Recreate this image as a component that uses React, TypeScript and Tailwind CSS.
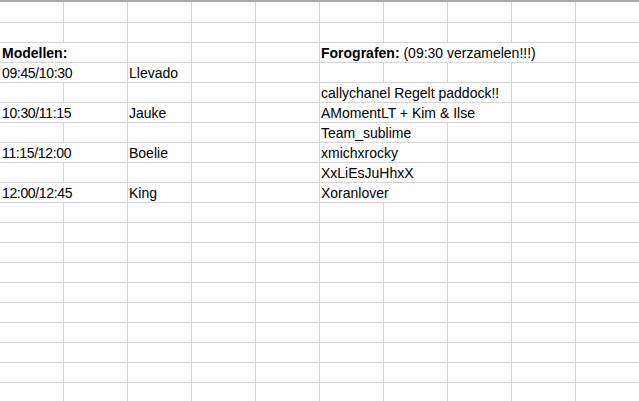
type Cell = { span?: number; text?: React.ReactNode; pad?: string };

const e = (n: number): Cell[] => Array.from({ length: n }, () => ({}));

const rows: Cell[][] = [
  e(10),
  e(10),
  [
    { span: 2, text: <b>Modellen:</b>, pad: "pl-[2px]" },
    ...e(3),
    {
      span: 4,
      text: (
        <>
          <b>Forografen:</b> (09:30 verzamelen!!!)
        </>
      ),
    },
    ...e(1),
  ],
  [{ span: 2, text: "09:45/10:30", pad: "pl-[2px] tracking-[-0.35px]" }, { text: "Llevado" }, ...e(7)],
  [...e(5), { span: 3, text: "callychanel Regelt paddock!!" }, ...e(2)],
  [
    { span: 2, text: "10:30/11:15", pad: "pl-[2px] tracking-[-0.35px]" },
    { text: "Jauke" },
    ...e(2),
    { span: 3, text: "AMomentLT + Kim & Ilse" },
    ...e(2),
  ],
  [...e(5), { span: 2, text: "Team_sublime" }, ...e(3)],
  [
    { span: 2, text: "11:15/12:00", pad: "pl-[2px] tracking-[-0.35px]" },
    { text: "Boelie" },
    ...e(2),
    { span: 2, text: "xmichxrocky" },
    ...e(3),
  ],
  [...e(5), { span: 2, text: "XxLiEsJuHhxX" }, ...e(3)],
  [
    { span: 2, text: "12:00/12:45", pad: "pl-[2px] tracking-[-0.35px]" },
    { text: "King" },
    ...e(2),
    { span: 2, text: "Xoranlover" },
    ...e(3),
  ],
  ...Array.from({ length: 12 }, () => e(10)),
];

const spanCls: Record<number, string> = {
  1: "col-span-1",
  2: "col-span-2",
  3: "col-span-3",
  4: "col-span-4",
};

export default function App() {
  return (
    <div
      className="w-[639px] h-[401px] overflow-hidden bg-white text-black text-[14px]"
      style={{ fontFamily: '"Liberation Sans", Arial, sans-serif' }}
    >
      <div className="h-[2px] w-[640px] bg-[#a8a8a8]" />
      {rows.map((row, i) => (
        <div
          key={i}
          className={`grid grid-cols-[repeat(10,64px)] w-[640px] border-b border-[#d4d4d4] ${
            i === 0 ? "h-[21px]" : "h-[20px]"
          }`}
        >
          {row.map((c, j) => (
            <div
              key={j}
              className={`${spanCls[c.span ?? 1]} border-r border-[#d4d4d4] whitespace-nowrap leading-[19px] pt-[1px] ${
                c.pad ?? "pl-[1px]"
              }`}
            >
              {c.text}
            </div>
          ))}
        </div>
      ))}
    </div>
  );
}
